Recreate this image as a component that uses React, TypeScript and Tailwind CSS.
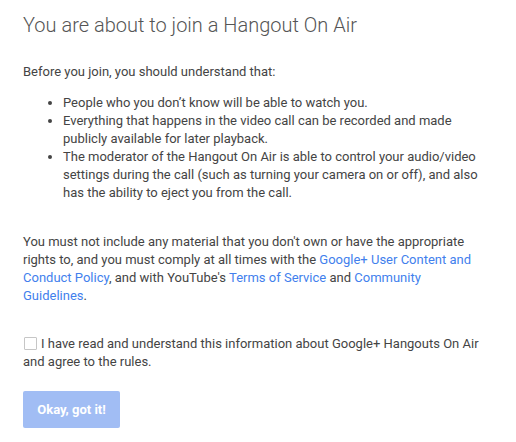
import React from 'react';

export default function App() {
  const link = 'text-[#427fed] hover:underline cursor-pointer';
  return (
    <div className="w-[516px] h-[442px] bg-white font-['Roboto',sans-serif] text-[#444] text-[13px] leading-[18px] pl-[23px] pt-[13px]">
      <h1 className="text-[20px] leading-[24px] font-light text-[#555]">You are about to join a Hangout On Air</h1>

      <p className="mt-[26px]">Before you join, you should understand that:</p>

      <ul className="list-disc pl-[40px] mt-[13px] w-[465px]">
        <li>People who you don’t know will be able to watch you.</li>
        <li>Everything that happens in the video call can be recorded and made publicly available for later playback.</li>
        <li>
          The moderator of the Hangout On Air is able to control your audio/video settings during the call (such as turning your
          camera on or off), and also has the ability to eject you from the call.
        </li>
      </ul>

      <p className="mt-[31px] w-[459px]">
        You must not include any material that you don't own or have the appropriate rights to, and you must comply at all times
        with the <a className={link}>Google+ User Content and Conduct Policy</a>, and with YouTube's{' '}
        <a className={link}>Terms of Service</a> and <a className={link}>Community Guidelines</a>.
      </p>

      <label className="block mt-[30px] w-[465px] cursor-pointer">
        <span className="inline-block align-[-2px] w-[13px] h-[13px] ml-px mr-[4px] border border-[#c6c6c6] rounded-[1px] bg-white" />
        I have read and understand this information about Google+ Hangouts On Air and agree to the rules.
      </label>

      <button
        disabled
        className="mt-[20px] w-[97px] h-[37px] rounded-[2px] bg-[#a1bdf4] text-white font-bold text-[13px] flex items-center justify-center"
      >
        Okay, got it!
      </button>
    </div>
  );
}
